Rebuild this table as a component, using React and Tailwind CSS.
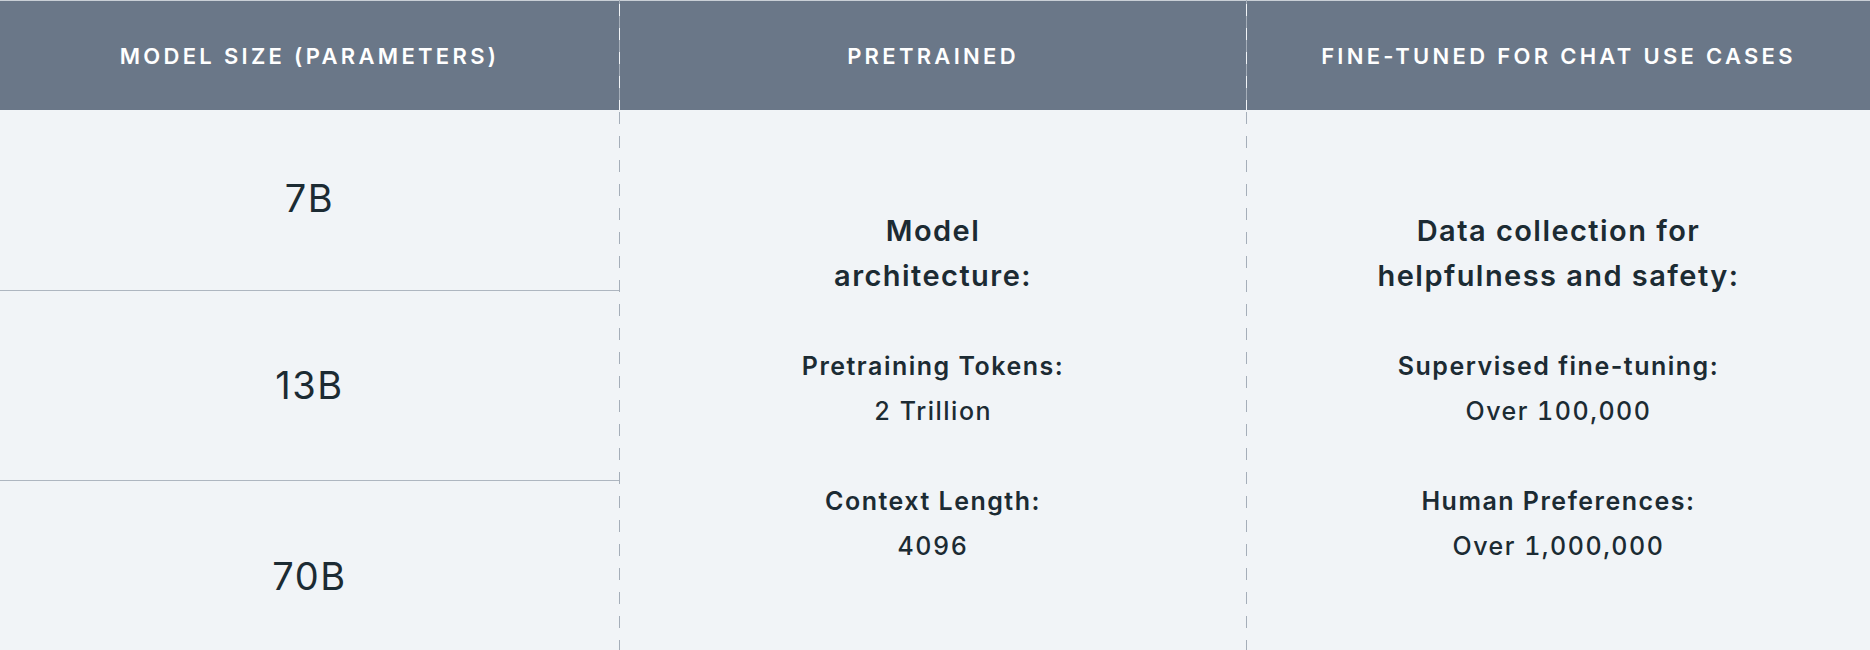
const dash =
  "w-px shrink-0 bg-[linear-gradient(to_bottom,#a5aeb9_50%,transparent_50%)] bg-[length:1px_24px] bg-[position:0_16px]";

function HeadCell({ children }) {
  return (
    <div className="flex h-[109px] items-center justify-center pt-px text-[22px] font-semibold uppercase tracking-[0.15em] text-white">
      {children}
    </div>
  );
}

function Stat({ label, value, first }) {
  return (
    <>
      <p className={first ? "mt-[46px] text-[25px] font-semibold tracking-[0.06em]" : "mt-[45px] text-[25px] font-semibold tracking-[0.06em]"}>
        {label}
      </p>
      <p className="text-[25px] font-medium tabular-nums tracking-[0.06em]">{value}</p>
    </>
  );
}

function InfoColumn({ title, stats }) {
  return (
    <div className="flex flex-col items-center pt-[98px] text-center leading-[45px]">
      <h3 className="text-[29px] font-semibold tracking-[0.05em]">
        {title.map((line) => (
          <span key={line} className="block">
            {line}
          </span>
        ))}
      </h3>
      {stats.map((s, i) => (
        <Stat key={s.label} label={s.label} value={s.value} first={i === 0} />
      ))}
    </div>
  );
}

export default function App() {
  return (
    <div
      className="h-[650px] w-[1870px] overflow-hidden bg-[#f1f4f7] text-[#1c2b33]"
      style={{ fontFamily: "Inter, 'Noto Sans', sans-serif" }}
    >
      <div className="flex">
        <div className="w-[619px] shrink-0">
          <div className="border-t border-[#c9cfd6] bg-[#6a7788]">
            <HeadCell>Model size (parameters)</HeadCell>
          </div>
          {["7B", "13B", "70B"].map((size, i) => (
            <div
              key={size}
              className={
                i === 0
                  ? "flex h-[181px] items-center justify-center border-b border-[#aeb6c0] pb-[3px] text-[38px] tracking-[0.04em]"
                  : i === 1
                  ? "flex h-[190px] items-center justify-center border-b border-[#aeb6c0] text-[38px] tracking-[0.04em]"
                  : "flex h-[190px] items-center justify-center text-[38px] tracking-[0.04em]"
              }
            >
              {size}
            </div>
          ))}
        </div>

        <div className={dash} />

        <div className="w-[626px] shrink-0">
          <div className="border-t border-[#c9cfd6] bg-[#6a7788]">
            <HeadCell>Pretrained</HeadCell>
          </div>
          <InfoColumn
            title={["Model", "architecture:"]}
            stats={[
              { label: "Pretraining Tokens:", value: "2 Trillion" },
              { label: "Context Length:", value: "4096" },
            ]}
          />
        </div>

        <div className={dash} />

        <div className="flex-1">
          <div className="border-t border-[#c9cfd6] bg-[#6a7788]">
            <HeadCell>Fine-tuned for chat use cases</HeadCell>
          </div>
          <InfoColumn
            title={["Data collection for", "helpfulness and safety:"]}
            stats={[
              { label: "Supervised fine-tuning:", value: "Over 100,000" },
              { label: "Human Preferences:", value: "Over 1,000,000" },
            ]}
          />
        </div>
      </div>
    </div>
  );
}
